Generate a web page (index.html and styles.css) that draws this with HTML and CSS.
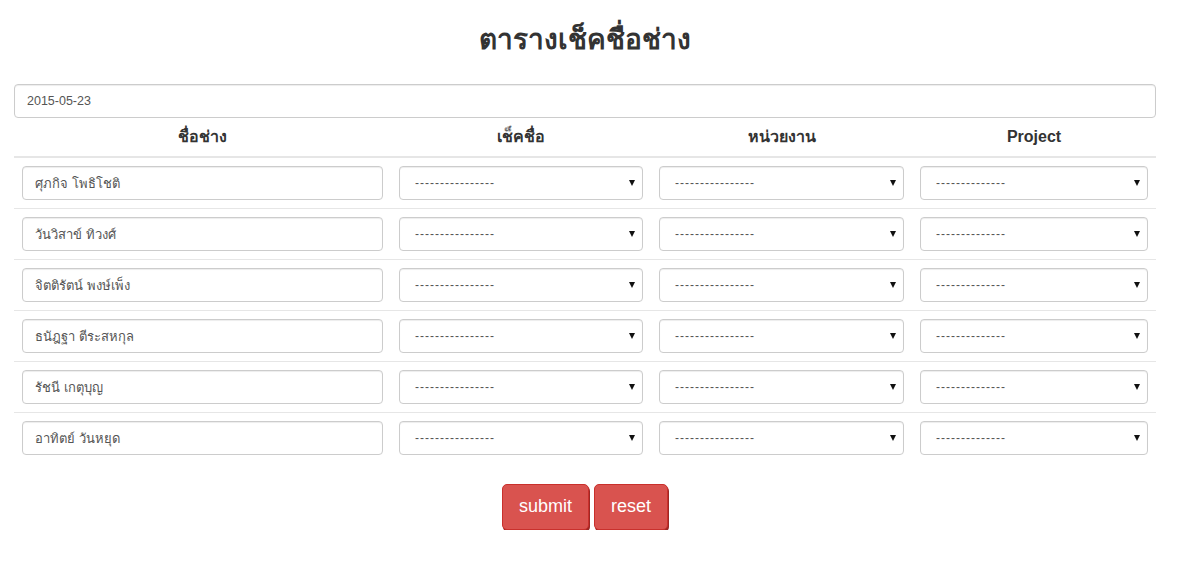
FILE: index.html
```html
<!DOCTYPE html>
<html lang="th">
<head>
<meta charset="UTF-8" />
<title>ตารางเช็คชื่อช่าง</title>
<link rel="stylesheet" href="styles.css">
</head>
<body>

<div class="container">
  <h2 class="titulo">ตารางเช็คชื่อช่าง</h2>

  <form>
    <input type="text" class="form-control date" value="2015-05-23">

    <table class="tabla">
      <thead>
        <tr>
          <th class="col-nombre">ชื่อช่าง</th>
          <th class="col-check">เช็คชื่อ</th>
          <th class="col-unidad">หน่วยงาน</th>
          <th class="col-project">Project</th>
        </tr>
      </thead>
      <tbody>
        <tr>
          <td><input type="text" class="form-control" value="ศุภกิจ โพธิโชติ"></td>
          <td><div class="sel"><select class="form-control"><option>----------------</option></select></div></td>
          <td><div class="sel"><select class="form-control"><option>----------------</option></select></div></td>
          <td><div class="sel"><select class="form-control"><option>--------------</option></select></div></td>
        </tr>
        <tr>
          <td><input type="text" class="form-control" value="วันวิสาข์ ทิวงศ์"></td>
          <td><div class="sel"><select class="form-control"><option>----------------</option></select></div></td>
          <td><div class="sel"><select class="form-control"><option>----------------</option></select></div></td>
          <td><div class="sel"><select class="form-control"><option>--------------</option></select></div></td>
        </tr>
        <tr>
          <td><input type="text" class="form-control" value="จิตติรัตน์ พงษ์เพ็ง"></td>
          <td><div class="sel"><select class="form-control"><option>----------------</option></select></div></td>
          <td><div class="sel"><select class="form-control"><option>----------------</option></select></div></td>
          <td><div class="sel"><select class="form-control"><option>--------------</option></select></div></td>
        </tr>
        <tr>
          <td><input type="text" class="form-control" value="ธนัฎฐา ตีระสหกุล"></td>
          <td><div class="sel"><select class="form-control"><option>----------------</option></select></div></td>
          <td><div class="sel"><select class="form-control"><option>----------------</option></select></div></td>
          <td><div class="sel"><select class="form-control"><option>--------------</option></select></div></td>
        </tr>
        <tr>
          <td><input type="text" class="form-control" value="รัชนี เกตุบุญ"></td>
          <td><div class="sel"><select class="form-control"><option>----------------</option></select></div></td>
          <td><div class="sel"><select class="form-control"><option>----------------</option></select></div></td>
          <td><div class="sel"><select class="form-control"><option>--------------</option></select></div></td>
        </tr>
        <tr>
          <td><input type="text" class="form-control" value="อาทิตย์ วันหยุด"></td>
          <td><div class="sel"><select class="form-control"><option>----------------</option></select></div></td>
          <td><div class="sel"><select class="form-control"><option>----------------</option></select></div></td>
          <td><div class="sel"><select class="form-control"><option>--------------</option></select></div></td>
        </tr>
      </tbody>
    </table>

    <div class="botones">
      <button type="submit" class="btn">submit</button>
      <button type="reset" class="btn">reset</button>
    </div>
  </form>
</div>

</body>
</html>
```

FILE: styles.css
```css
body {
  margin: 0;
  background: #fff;
  color: #333;
  font-family: "Liberation Sans", "Noto Sans", sans-serif;
  font-size: 14px;
  line-height: 1.42857;
}
.container {
  width: 1142px;
  margin-left: 14px;
}
.titulo {
  margin: 23px 0 27px;
  font-size: 28px;
  font-weight: bold;
  line-height: 1.2;
  text-align: center;
  color: #333;
}
.form-control {
  display: block;
  width: 100%;
  height: 34px;
  box-sizing: border-box;
  padding: 6px 12px;
  font-family: inherit;
  font-size: 13px;
  color: #555;
  background: #fff;
  border: 1px solid #ccc;
  border-radius: 4px;
  box-shadow: inset 0 1px 1px rgba(0,0,0,.075);
}
.date {
  font-size: 12.5px;
}

/* Tabla */
.tabla {
  width: 100%;
  border-collapse: collapse;
  border-spacing: 0;
}
.tabla th {
  padding: 8px;
  font-size: 16px;
  font-weight: bold;
  text-align: center;
  border-bottom: 2px solid #e6e6e6;
}
.tabla td {
  padding: 8px;
  border-top: 1px solid #e6e6e6;
}
.tabla tbody tr:first-child td {
  border-top: none;
}
.col-nombre { width: 361px; }
.col-check { width: 244px; }
.col-unidad { width: 245px; }
.col-project { width: 228px; }

.sel {
  position: relative;
}
.sel select {
  appearance: none;
  -webkit-appearance: none;
  font-size: 12px;
  letter-spacing: 1px;
  padding-left: 15px;
}
.sel::after {
  content: "";
  position: absolute;
  right: 8px;
  top: 14px;
  border-left: 3.5px solid transparent;
  border-right: 3.5px solid transparent;
  border-top: 6px solid #111;
  pointer-events: none;
}

/* Botones */
.botones {
  display: flex;
  justify-content: center;
  gap: 5px;
  margin-top: 21px;
}
.btn {
  padding: 10px 16px;
  font-family: inherit;
  font-size: 18px;
  line-height: 1.3333;
  color: #fff;
  background-color: #d9534f;
  border: 1px solid #c9302c;
  border-radius: 5px;
  box-shadow: 1px 2px 0 #9e2724;
  cursor: pointer;
}
```
